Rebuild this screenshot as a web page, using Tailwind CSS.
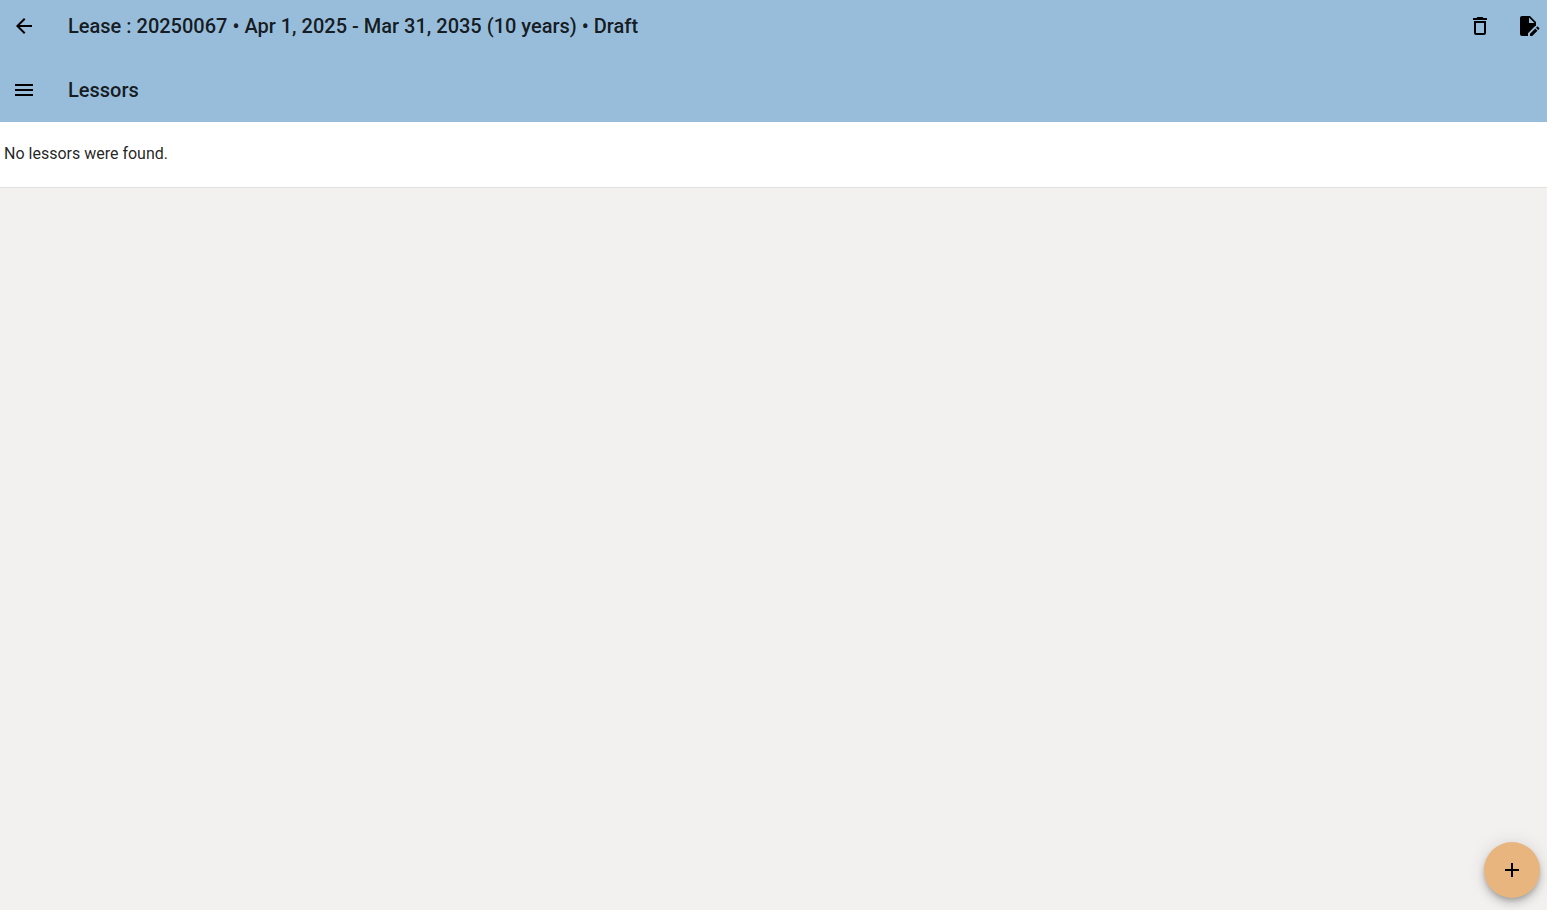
<!DOCTYPE html>
<html lang="en">
<head>
  <meta charset="UTF-8">
  <meta name="viewport" content="width=device-width, initial-scale=1.0">
  <title>Lease 20250067 - Lessors</title>
  <script src="https://cdn.jsdelivr.net/npm/@tailwindcss/browser@4"></script>
</head>
<body class="min-h-screen bg-[#f2f1ef] font-[Roboto,sans-serif] text-black/87">
  <header class="bg-[#97bdda]">
    <div class="flex h-[58px] items-start pt-[2px]">
      <button type="button" aria-label="Back" class="flex size-12 items-center justify-center text-black">
        <svg class="size-6" viewBox="0 0 24 24" fill="currentColor"><path d="M20 11H7.830l5.590-5.590L12 4l-8 8 8 8 1.410-1.410L7.830 13H20v-2z"/></svg>
      </button>
      <h1 class="ml-5 grow text-xl leading-[48px] font-medium">Lease : 20250067 • Apr 1, 2025 - Mar 31, 2035 (10 years) • Draft</h1>
      <button type="button" aria-label="Delete" class="flex size-12 items-center justify-center text-black">
        <svg class="size-6" viewBox="0 0 24 24" fill="currentColor"><path d="M6 19c0 1.100.9 2 2 2h8c1.100 0 2-.9 2-2V7H6v12zM8 9h8v10H8V9zm7.500-5l-1-1h-5l-1 1H5v2h14V4z"/></svg>
      </button>
      <button type="button" aria-label="Edit lease" class="flex h-12 w-[43px] items-center justify-end pr-[7px] text-black">
        <svg class="size-6" viewBox="0 0 24 24" fill="currentColor">
          <path fill-rule="evenodd" d="M6 2h8l6 6v4.100c-.8.100-1.500.5-2.100 1.100L12 19.200V22H6c-1.100 0-2-.9-2-2V4c0-1.100.9-2 2-2zm7 1.500V9h5.500L13 3.500z"/>
          <path d="M14 22v-2.200l5.300-5.300 2.200 2.200L16.200 22H14zm8.200-6l-2.200-2.200 1-1c.3-.3.7-.3 1 0l1.200 1.200c.3.3.3.700 0 1l-1 1z"/>
        </svg>
      </button>
    </div>
    <div class="flex h-16 items-center">
      <button type="button" aria-label="Menu" class="flex size-12 items-center justify-center text-black">
        <svg class="size-6" viewBox="0 0 24 24" fill="currentColor"><path d="M3 18h18v-2H3v2zm0-5h18v-2H3v2zm0-7v2h18V6H3z"/></svg>
      </button>
      <h2 class="ml-5 text-xl font-medium">Lessors</h2>
    </div>
  </header>
  <main class="border-b border-[#e0e0e0] bg-white px-1 pt-5 pb-[21px]">
    <p class="text-base">No lessors were found.</p>
  </main>
  <button type="button" aria-label="Add lessor" class="fixed right-[7px] bottom-3 flex size-14 items-center justify-center rounded-full bg-[#e8b57e] text-black shadow-[0_3px_5px_-1px_rgba(0,0,0,0.2),0_6px_10px_0_rgba(0,0,0,0.14),0_1px_18px_0_rgba(0,0,0,0.12)]">
    <svg class="size-6" viewBox="0 0 24 24" fill="currentColor"><path d="M19 13h-6v6h-2v-6H5v-2h6V5h2v6h6v2z"/></svg>
  </button>
</body>
</html>
